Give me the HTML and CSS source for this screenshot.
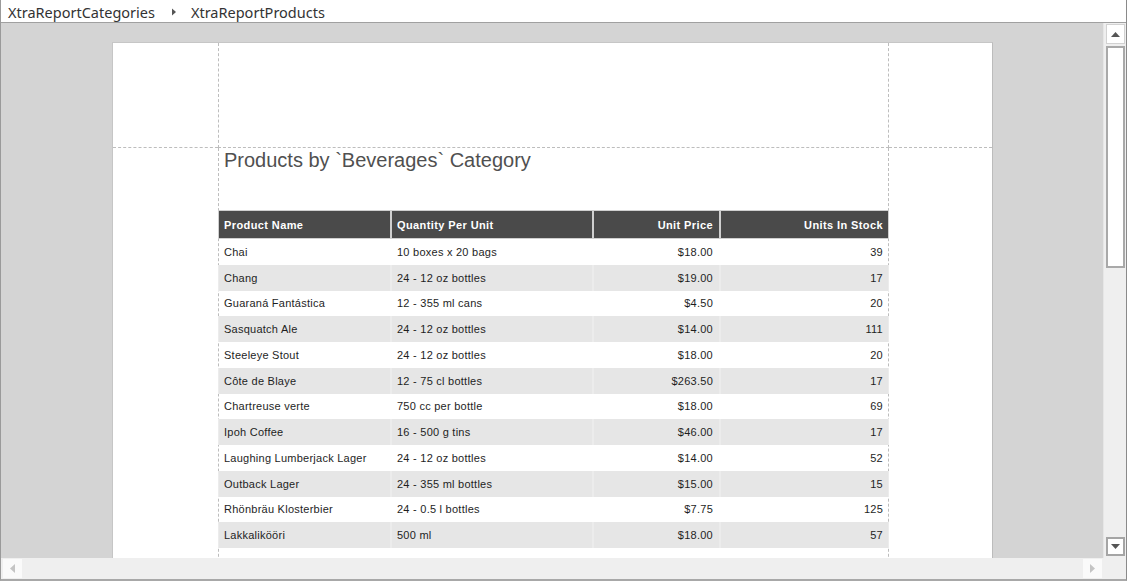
FILE: index.html
```html
<!DOCTYPE html>
<html>
<head>
<meta charset="utf-8">
<link rel="stylesheet" href="styles.css">
</head>
<body>
<div class="app">
  <div class="crumbs">
    <span class="crumb">XtraReportCategories</span>
    <svg class="crumb-sep" width="6" height="8" viewBox="0 0 6 8"><path d="M1 0.5 L5 4 L1 7.5 Z" fill="#555"/></svg>
    <span class="crumb">XtraReportProducts</span>
  </div>
  <div class="viewer">
    <div class="canvas">
      <div class="page">
        <div class="cell top side"></div>
        <div class="cell top mid"></div>
        <div class="cell top side"></div>
        <div class="cell side"></div>
        <div class="cell mid body">
          <div class="title">Products by `Beverages` Category</div>
          <table class="grid">
            <colgroup>
              <col style="width:173px"><col style="width:202px"><col style="width:127px"><col style="width:169px">
            </colgroup>
            <thead>
              <tr><th>Product Name</th><th>Quantity Per Unit</th><th class="r">Unit Price</th><th class="r last">Units In Stock</th></tr>
            </thead>
            <tbody>
              <tr><td>Chai</td><td>10 boxes x 20 bags</td><td class="r">$18.00</td><td class="r last">39</td></tr>
              <tr><td>Chang</td><td>24 - 12 oz bottles</td><td class="r">$19.00</td><td class="r last">17</td></tr>
              <tr><td>Guaraná Fantástica</td><td>12 - 355 ml cans</td><td class="r">$4.50</td><td class="r last">20</td></tr>
              <tr><td>Sasquatch Ale</td><td>24 - 12 oz bottles</td><td class="r">$14.00</td><td class="r last">111</td></tr>
              <tr><td>Steeleye Stout</td><td>24 - 12 oz bottles</td><td class="r">$18.00</td><td class="r last">20</td></tr>
              <tr><td>Côte de Blaye</td><td>12 - 75 cl bottles</td><td class="r">$263.50</td><td class="r last">17</td></tr>
              <tr><td>Chartreuse verte</td><td>750 cc per bottle</td><td class="r">$18.00</td><td class="r last">69</td></tr>
              <tr><td>Ipoh Coffee</td><td>16 - 500 g tins</td><td class="r">$46.00</td><td class="r last">17</td></tr>
              <tr><td>Laughing Lumberjack Lager</td><td>24 - 12 oz bottles</td><td class="r">$14.00</td><td class="r last">52</td></tr>
              <tr><td>Outback Lager</td><td>24 - 355 ml bottles</td><td class="r">$15.00</td><td class="r last">15</td></tr>
              <tr><td>Rhönbräu Klosterbier</td><td>24 - 0.5 l bottles</td><td class="r">$7.75</td><td class="r last">125</td></tr>
              <tr><td>Lakkalikööri</td><td>500 ml</td><td class="r">$18.00</td><td class="r last">57</td></tr>
            </tbody>
          </table>
        </div>
        <div class="cell side"></div>
      </div>
    </div>
    <div class="vscroll">
      <div class="sbtn up"><svg width="9" height="5" viewBox="0 0 9 5"><path d="M0 5 L4.5 0 L9 5 Z" fill="#555"/></svg></div>
      <div class="thumb"></div>
      <div class="vtrack"></div>
      <div class="sbtn down"><svg width="9" height="5" viewBox="0 0 9 5"><path d="M0 0 L4.5 5 L9 0 Z" fill="#555"/></svg></div>
    </div>
  </div>
  <div class="hbar">
    <div class="hscroll">
      <div class="sbtn hb"><svg width="5" height="9" viewBox="0 0 5 9"><path d="M5 0 L0 4.5 L5 9 Z" fill="#c4c4c4"/></svg></div>
      <div class="htrack"></div>
      <div class="sbtn hb"><svg width="5" height="9" viewBox="0 0 5 9"><path d="M0 0 L5 4.5 L0 9 Z" fill="#c4c4c4"/></svg></div>
    </div>
    <div class="corner"></div>
  </div>
</div>
</body>
</html>
```

FILE: styles.css
```css
* { box-sizing: border-box; }
html, body { margin: 0; padding: 0; background: #fff; }
body { width: 1127px; height: 581px; overflow: hidden; }

.app {
  width: 1127px;
  height: 581px;
  display: flex;
  flex-direction: column;
  border-left: 1px solid #9a9a9a;
  border-right: 1px solid #8a8a8a;
  border-bottom: 2px solid #a8a8a8;
}

.crumbs {
  height: 23px;
  flex: none;
  display: flex;
  align-items: center;
  padding-left: 7px;
  padding-top: 1px;
  border-bottom: 1px solid #a0a0a0;
  font-family: "Noto Sans", "Open Sans", sans-serif;
  font-size: 14.5px;
  color: #333;
  background: #fff;
}
.crumb { line-height: 20px; }
.crumb-sep { margin: 0 14px 0 16px; }

.viewer {
  height: 535px;
  flex: none;
  display: flex;
}

.canvas {
  flex: 1;
  background: #d4d4d4;
  overflow: hidden;
  padding: 19px 0 0 111px;
}

.page {
  width: 881px;
  height: 620px;
  background: #fff;
  border-left: 1px solid #c6c6c6;
  border-top: 1px solid #c6c6c6;
  border-right: 1px solid #bcbcbc;
  display: grid;
  grid-template-columns: 105px 671px 1fr;
  grid-template-rows: 105px 1fr;
}

.cell.top { border-bottom: 1px dashed #bdbdbd; }
.cell.mid { border-left: 1px dashed #bdbdbd; border-right: 1px dashed #bdbdbd; }

.body { padding: 0; }

.title {
  font-family: "Liberation Sans", Arial, sans-serif;
  font-size: 20px;
  line-height: 24px;
  color: #505050;
  padding-left: 5px;
  margin-top: 0;
}

.grid {
  margin: 38px 0 0 -1px;
  width: 671px;
  table-layout: fixed;
  border-collapse: separate;
  border-spacing: 0;
  font-family: "Liberation Sans", Arial, sans-serif;
  font-size: 11px;
  letter-spacing: 0.25px;
  color: #1e1e1e;
}

.grid th {
  height: 29px;
  background: #4a4a4a;
  color: #fff;
  font-weight: bold;
  letter-spacing: 0.4px;
  text-align: left;
  padding: 0 5px;
  border: 1px solid #cfcfcf;
  white-space: nowrap;
}
.grid th.r, .grid td.r { text-align: right; padding-right: 6px; }
.grid th.last, .grid td.last { padding-right: 5px; }

.grid td {
  height: 25.75px;
  padding: 0 5px;
  border-left: 1px solid transparent;
  border-right: 1px solid transparent;
  white-space: nowrap;
}
.grid tbody tr:nth-child(even) td {
  background: #e6e6e6;
  border-left-color: #ececec;
  border-right-color: #ececec;
}

.vscroll {
  width: 23px;
  flex: none;
  background: #efefef;
  display: flex;
  flex-direction: column;
  align-items: center;
  padding: 1px 0 2px 0;
  border-left: 1px solid #e6e6e6;
}
.sbtn {
  display: flex;
  align-items: center;
  justify-content: center;
  background: #fff;
  flex: none;
}
.sbtn.up {
  width: 19px;
  height: 20px;
  border: 1px solid #d2d2d2;
}
.thumb {
  width: 19px;
  height: 222px;
  margin-top: 2px;
  background: #fff;
  border: 2px solid #a9a9a9;
  flex: none;
}
.vtrack { flex: 1; }
.sbtn.down {
  width: 19px;
  height: 19px;
  border: 2px solid #a5a5a5;
}

.hbar {
  height: 21px;
  flex: none;
  display: flex;
  background: #efefef;
}
.hscroll {
  flex: 1;
  display: flex;
  align-items: center;
  padding: 0 1px 0 2px;
}
.sbtn.hb {
  width: 19px;
  height: 19px;
  background: #fafafa;
}
.htrack { flex: 1; }
.corner { width: 23px; flex: none; background: #efefef; }
```
